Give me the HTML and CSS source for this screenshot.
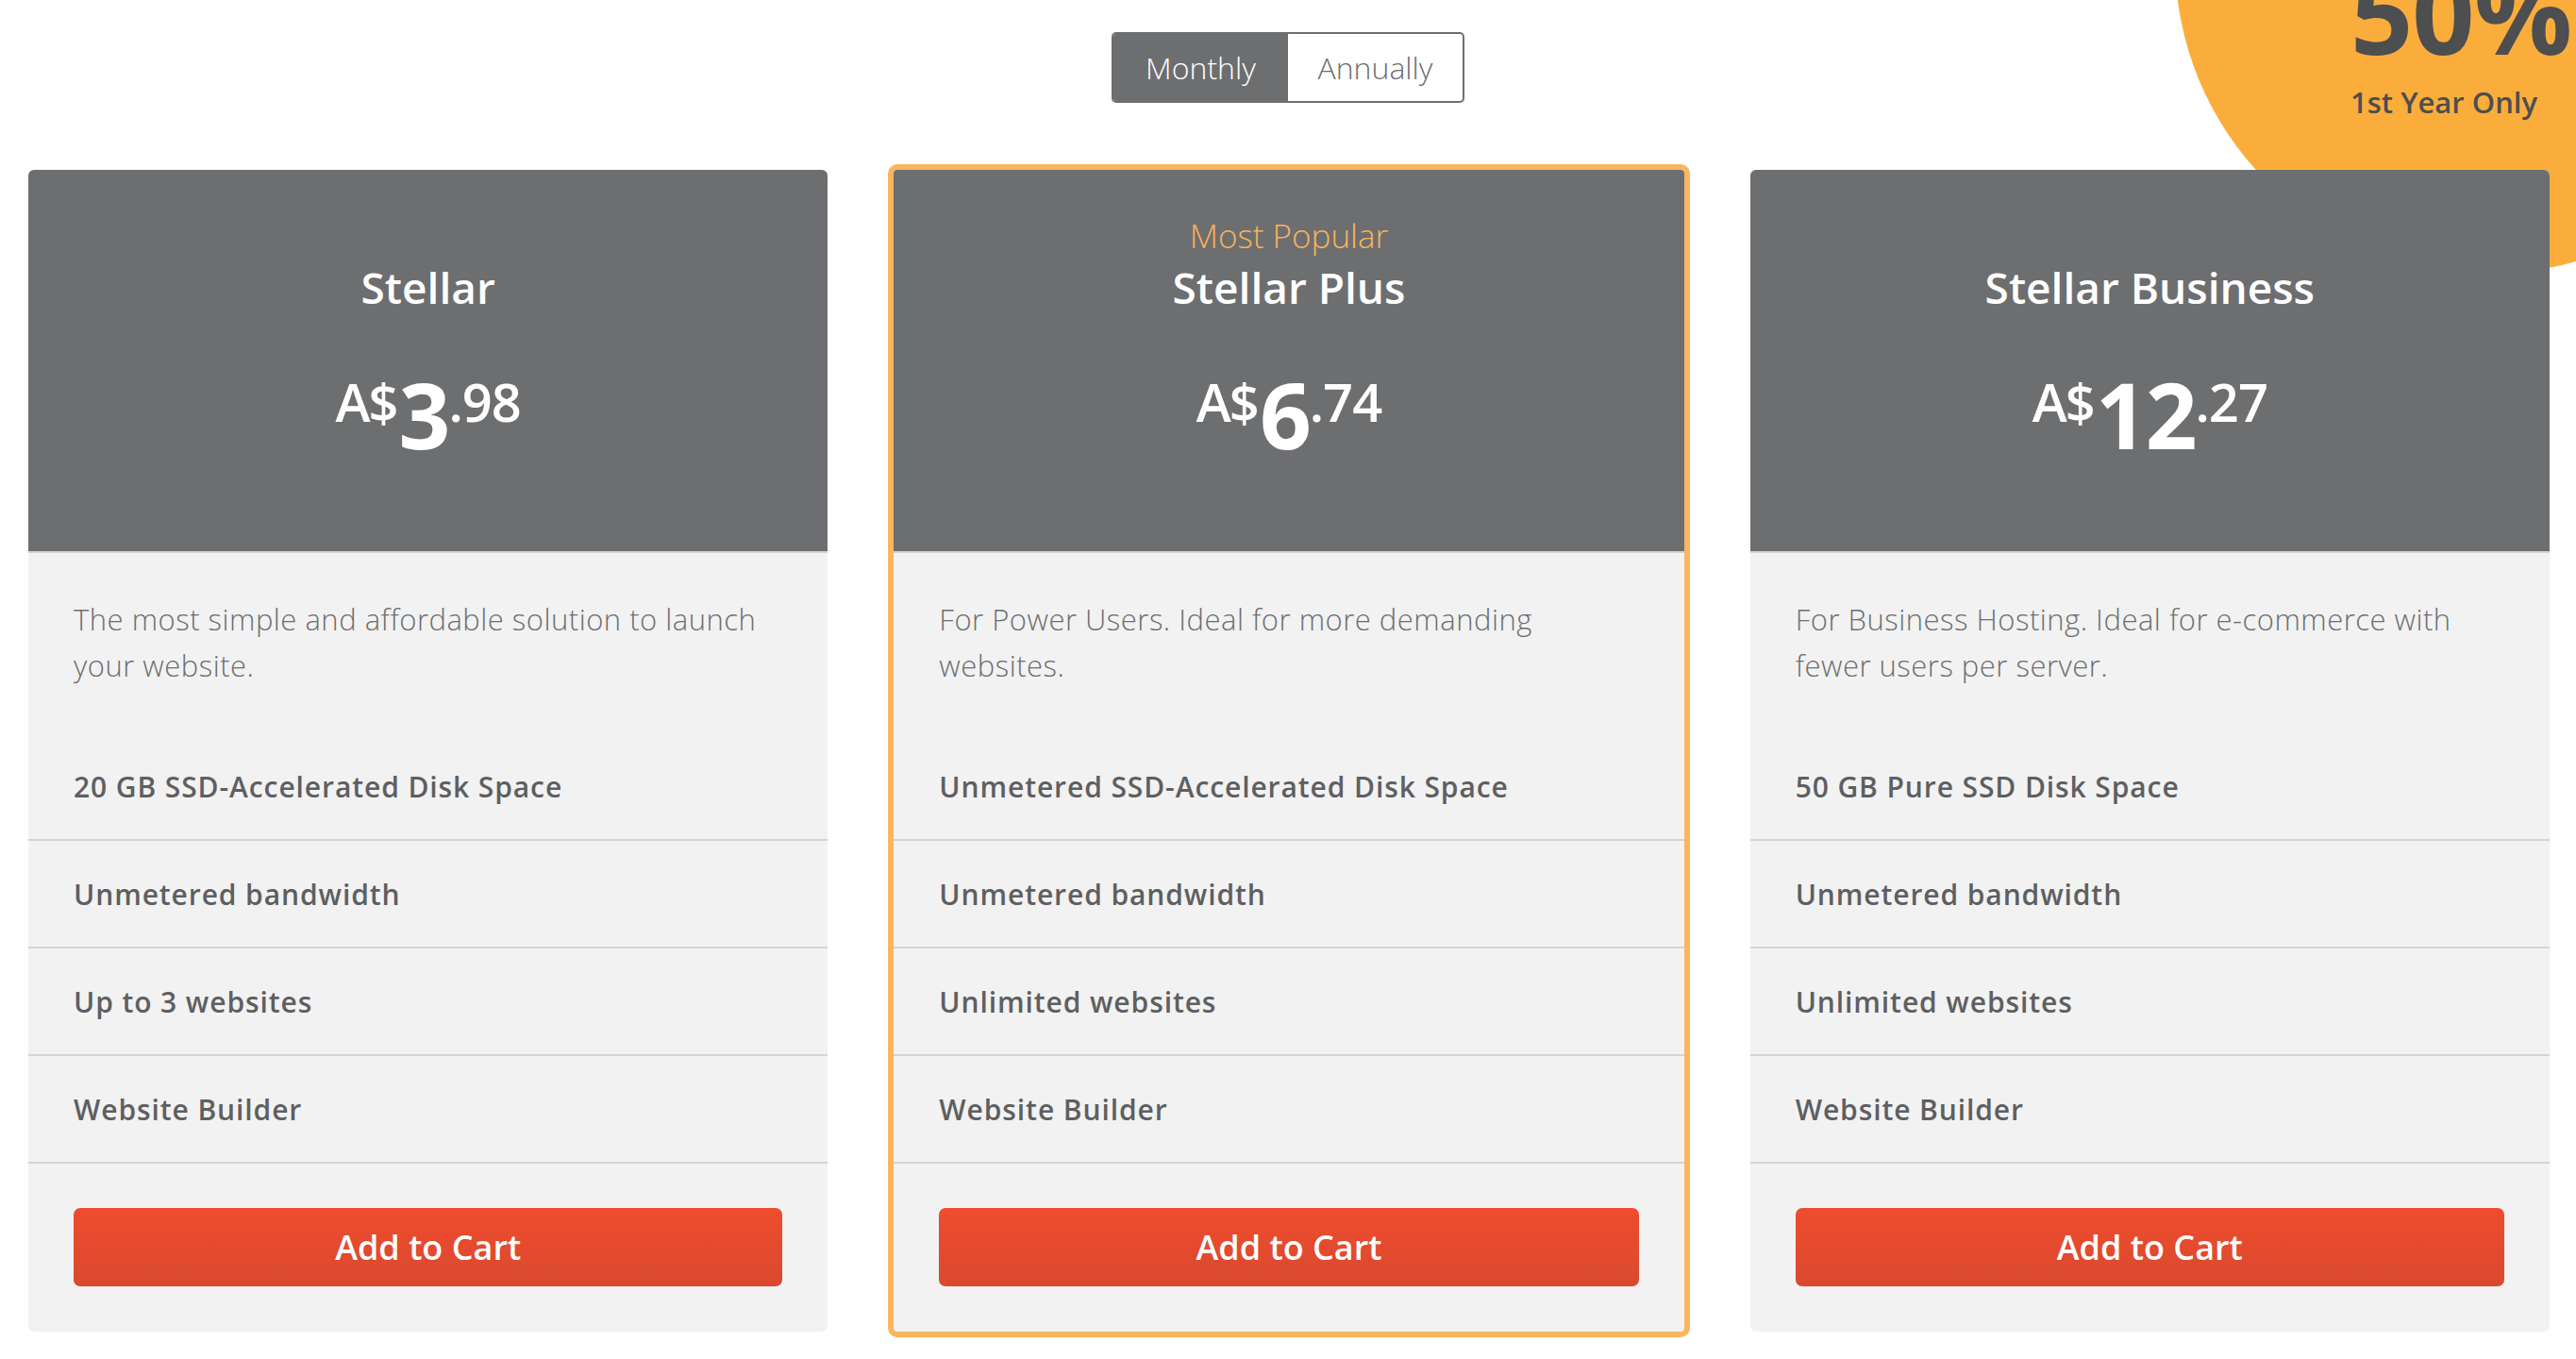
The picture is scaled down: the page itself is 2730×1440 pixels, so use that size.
FILE: index.html
```html
<!DOCTYPE html>
<html lang="en">
<head>
<meta charset="utf-8">
<title>Stellar Hosting Plans</title>
<link rel="stylesheet" href="styles.css">
</head>
<body>
<div class="page">
  <div class="promo">
    <div class="promo-text">
      <div class="promo-big">50% off</div>
      <div class="promo-small">1st Year Only</div>
    </div>
  </div>

  <div class="toggle-wrap">
    <div class="toggle">
      <span class="toggle-btn active">Monthly</span>
      <span class="toggle-btn">Annually</span>
    </div>
  </div>

  <div class="cards">
    <div class="card">
      <div class="card-head">
        <div class="tag"></div>
        <h2 class="name">Stellar</h2>
        <div class="price"><span class="cur">A$</span><span class="int">3</span><span class="dec">.98</span></div>
      </div>
      <p class="desc">The most simple and affordable solution to launch your website.</p>
      <ul class="features">
        <li>20 GB SSD-Accelerated Disk Space</li>
        <li>Unmetered bandwidth</li>
        <li>Up to 3 websites</li>
        <li>Website Builder</li>
      </ul>
      <div class="card-foot"><button class="cart">Add to Cart</button></div>
    </div>

    <div class="card featured">
      <div class="card-head">
        <div class="tag">Most Popular</div>
        <h2 class="name">Stellar Plus</h2>
        <div class="price"><span class="cur">A$</span><span class="int">6</span><span class="dec">.74</span></div>
      </div>
      <p class="desc">For Power Users. Ideal for more demanding websites.</p>
      <ul class="features">
        <li>Unmetered SSD-Accelerated Disk Space</li>
        <li>Unmetered bandwidth</li>
        <li>Unlimited websites</li>
        <li>Website Builder</li>
      </ul>
      <div class="card-foot"><button class="cart">Add to Cart</button></div>
    </div>

    <div class="card">
      <div class="card-head">
        <div class="tag"></div>
        <h2 class="name">Stellar Business</h2>
        <div class="price"><span class="cur">A$</span><span class="int">12</span><span class="dec">.27</span></div>
      </div>
      <p class="desc">For Business Hosting. Ideal for e-commerce with fewer users per server.</p>
      <ul class="features">
        <li>50 GB Pure SSD Disk Space</li>
        <li>Unmetered bandwidth</li>
        <li>Unlimited websites</li>
        <li>Website Builder</li>
      </ul>
      <div class="card-foot"><button class="cart">Add to Cart</button></div>
    </div>
  </div>
</div>
</body>
</html>
```

FILE: styles.css
```css
* { box-sizing: border-box; }

html, body {
  margin: 0;
  padding: 0;
  background: #ffffff;
}

body {
  width: 2730px;
  height: 1440px;
  overflow: hidden;
  font-family: "Open Sans", "Liberation Sans", sans-serif;
  color: #6d6e70;
}

.page {
  position: relative;
  width: 2730px;
  height: 1440px;
  overflow: hidden;
}

/* promo circle */
.promo {
  position: absolute;
  left: 2305px;
  top: -376px;
  width: 666px;
  height: 666px;
  border-radius: 50%;
  background: #fbad3c;
  z-index: 0;
}

.promo-text {
  position: absolute;
  left: 186px;
  top: 335px;
  color: #4d4e50;
  white-space: nowrap;
}

.promo-big {
  font-size: 116px;
  font-weight: 700;
  line-height: 1;
  margin-top: -4px;
  letter-spacing: -1px;
}

.promo-small {
  font-size: 31px;
  font-weight: 600;
  line-height: 1;
  margin-top: 22px;
}

/* toggle */
.toggle-wrap {
  position: relative;
  z-index: 1;
  display: flex;
  justify-content: center;
  padding-top: 34px;
}

.toggle {
  display: flex;
  height: 75px;
  border: 2px solid #6d6e70;
  border-radius: 5px;
  overflow: hidden;
  background: #ffffff;
}

.toggle-btn {
  width: 185px;
  display: flex;
  align-items: center;
  justify-content: center;
  font-size: 32px;
  font-weight: 300;
  color: #6d6e70;
}

.toggle-btn.active {
  background: #6d6e70;
  color: #ffffff;
}

/* cards */
.cards {
  position: relative;
  z-index: 1;
  display: grid;
  grid-template-columns: repeat(3, 1fr);
  column-gap: 65px;
  padding: 0 28px 0 30px;
  margin-top: 71px;
  align-items: start;
}

.card {
  background: #f2f2f2;
  border-radius: 6px;
  overflow: hidden;
}

.card.featured {
  border: 6px solid #f9b660;
  border-radius: 10px;
  margin: -6px -1px 0 -1px;
}

.card-head {
  height: 406px;
  padding-top: 48px;
  background: #6d6e70;
  border-bottom: 2px solid #d4d4d4;
  text-align: center;
  color: #ffffff;
}

.tag {
  height: 44px;
  line-height: 44px;
  font-size: 35px;
  font-weight: 300;
  color: #f8b35c;
}

.name {
  margin: 4px 0 0 0;
  height: 56px;
  line-height: 56px;
  font-size: 46px;
  font-weight: 600;
}

.price {
  display: flex;
  justify-content: center;
  align-items: flex-start;
  margin-top: 59px;
}

.cur,
.dec {
  font-size: 56px;
  font-weight: 600;
  line-height: 1;
  margin-top: 6px;
}

.cur { letter-spacing: -2px; margin-right: 2px; }
.dec { letter-spacing: -1px; }

.int {
  font-size: 96px;
  font-weight: 700;
  line-height: 1;
  letter-spacing: -2px;
}

.desc {
  margin: 0;
  height: 191px;
  padding: 46px 48px 0 48px;
  font-size: 31px;
  line-height: 49px;
  font-weight: 300;
  letter-spacing: 0.5px;
  color: #6d6e70;
}

.features {
  list-style: none;
  margin: 0;
  padding: 0;
}

.features li {
  height: 114px;
  padding: 0 48px;
  display: flex;
  align-items: center;
  border-bottom: 2px solid #d4d4d4;
  font-size: 30px;
  font-weight: 600;
  letter-spacing: 0.9px;
  color: #5e5f61;
}

.card-foot {
  padding: 47px 48px 48px 48px;
}

.cart {
  display: block;
  width: 100%;
  height: 83px;
  border: none;
  border-radius: 7px;
  background: linear-gradient(to bottom, #ef4c2d 0%, #d9492f 100%);
  color: #ffffff;
  font-family: "Open Sans", "Liberation Sans", sans-serif;
  font-size: 36px;
  font-weight: 600;
  cursor: pointer;
}
```
